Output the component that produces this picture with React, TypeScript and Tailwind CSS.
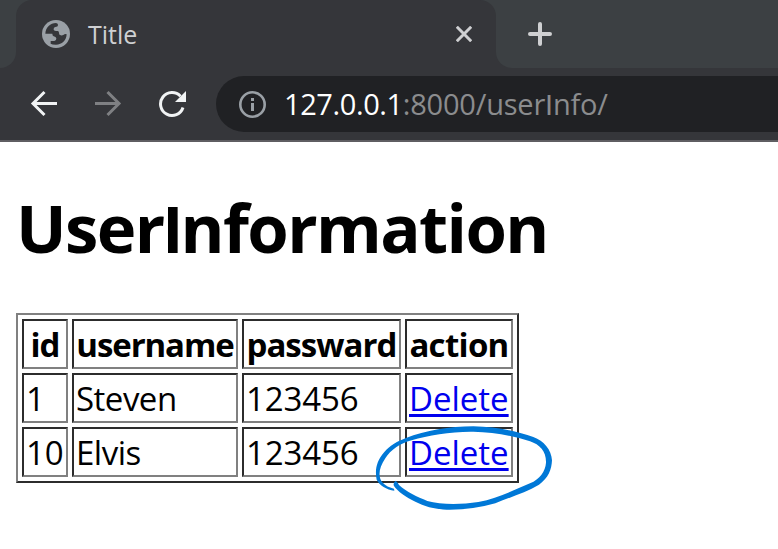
const cell =
  "h-[50px] border-2 border-t-[#2c2c2c] border-l-[#2c2c2c] border-r-[#808080] border-b-[#808080] p-0 px-[2px] pt-[2px] align-middle whitespace-nowrap";

const users = [
  { id: "1", username: "Steven", password: "123456" },
  { id: "10", username: "Elvis", password: "123456" },
];

function GlobeIcon() {
  return (
    <svg className="size-7 shrink-0" viewBox="0 0 84 84">
      <circle cx="42" cy="42" r="42" fill="#9aa0a6" />
      <path
        d="M10 41C11 22 25 9 42 9Q49 10 48 16Q48 21 40 21Q34 22 35 29Q36 33 47 33Q51 33 51 38Q50 44 56 46Q60 47 64 45Q69 41 74 43C73 61 60 74 42 74Q30 74 26 71V63H37Q44 62 43 55Q42 50 35 49Q31 47 31 41Z"
        fill="#35363a"
      />
    </svg>
  );
}

export default function App() {
  return (
    <div className="relative h-[549px] w-[778px] overflow-hidden bg-white font-['Open_Sans',sans-serif]">
      <header className="h-[142px] border-b-2 border-[#5f5e62] bg-[#35363a]">
        <div className="flex h-[68px]">
          <div className="w-4 rounded-br-[16px] bg-[#3c4043]" />
          <div className="flex w-[480px] bg-[#3c4043]">
            <div className="flex h-[68px] w-full items-center rounded-t-[16px] bg-[#35363a] pr-6 pl-[26px]">
              <GlobeIcon />
              <span className="ml-[18px] flex-1 text-[25px] leading-[34px] text-[#cfd0d2]">Title</span>
              <svg className="size-4" viewBox="0 0 16 16" fill="none" stroke="#cfd0d2" strokeWidth="3">
                <path d="M.8.8l14.4 14.4M15.2.8.8 15.2" />
              </svg>
            </div>
          </div>
          <div className="flex flex-1 items-center rounded-bl-[16px] bg-[#3c4043] pl-8">
            <svg className="size-6" viewBox="0 0 24 24" fill="none" stroke="#cfd0d2" strokeWidth="4" strokeLinecap="round">
              <path d="M12 2v20M2 12h20" />
            </svg>
          </div>
        </div>
        <div className="flex h-[72px] items-center pl-[30px]">
          <svg className="size-7" viewBox="0 0 28 28" fill="none" stroke="#f1f3f4" strokeWidth="3">
            <path d="M27 13.5H3M14.5 2 3 13.5 14.5 25" />
          </svg>
          <svg className="ml-9 size-7" viewBox="0 0 28 28" fill="none" stroke="#7f8083" strokeWidth="3">
            <path d="M1 13.5h24M13.5 2 25 13.5 13.5 25" />
          </svg>
          <svg className="ml-9 size-7" viewBox="0 0 28 28" fill="none">
            <path d="M22.5 6.2A11.5 11.5 0 1 0 25 17.5" stroke="#f1f3f4" strokeWidth="3" />
            <path d="M28 1v11H17z" fill="#f1f3f4" />
          </svg>
          <div className="ml-[30px] flex h-14 flex-1 items-center rounded-l-full bg-[#202124] pl-[22px]">
            <svg className="size-7" viewBox="0 0 28 28">
              <circle cx="14.5" cy="14.5" r="12.2" fill="none" stroke="#9aa0a6" strokeWidth="2.6" />
              <path d="M13 8h3v3h-3zM13 13h3v8h-3z" fill="#9aa0a6" />
            </svg>
            <span className="ml-[18px] text-[29px] leading-10 tracking-[-0.2px] whitespace-nowrap text-[#8b8c8e]">
              <span className="tracking-[-0.4px] text-white">127.0.0.1</span>:8000/user
              <span className="font-['Liberation_Sans',sans-serif]">I</span>nfo/
            </span>
          </div>
        </div>
      </header>
      <main className="px-4 pt-[41px] text-[33px] leading-[44px] text-black">
        <h1 className="h-[88px] text-[67px] leading-[88px] font-bold tracking-[-1.6px] whitespace-nowrap">
          User<span className="font-['Liberation_Sans',sans-serif]">I</span>nformation
        </h1>
        <table className="mt-[42px] w-[503px] table-fixed border-separate border-spacing-[4px] border-2 border-t-[#808080] border-r-[#2c2c2c] border-b-[#2c2c2c] border-l-[#808080]">
          <colgroup>
            <col className="w-[46px]" />
            <col className="w-[166px]" />
            <col className="w-[159px]" />
            <col className="w-[108px]" />
          </colgroup>
          <thead>
            <tr className="text-center font-bold tracking-[-1.1px]">
              <th className={cell}>id</th>
              <th className={cell}>username</th>
              <th className={`${cell} tracking-[-0.95px]`}>passward</th>
              <th className={`${cell} tracking-[-0.7px]`}>action</th>
            </tr>
          </thead>
          <tbody>
            {users.map((user) => (
              <tr key={user.id}>
                <td className={cell}>{user.id}</td>
                <td className={`${cell} tracking-[-0.5px]`}>{user.username}</td>
                <td className={`${cell} tracking-[-0.1px]`}>{user.password}</td>
                <td className={cell}>
                  <a className="text-[#0000ee] underline decoration-[3px] underline-offset-[3px]">Delete</a>
                </td>
              </tr>
            ))}
          </tbody>
        </table>
      </main>
      <svg className="pointer-events-none absolute top-[410px] left-[360px] h-[110px] w-[210px]" viewBox="0 0 630 330">
        <path
          d="M103 242C80 239 58 226 50 209C44 180 50 151 73 126C89 107 110 95 138 84C196 62 270 49 340 49C410 50 470 64 520 81C552 93 574 119 576 151C575 178 565 205 537 224C497 247 450 262 406 280C360 293 310 300 260 299C220 297 192 288 166 275C139 262 112 244 102 228Q98 219 107 212Q115 219 117 225C139 246 172 260 202 273C242 284 302 284 355 276C412 266 458 242 510 220C540 207 556 184 558 158C559 125 540 104 510 94C455 76 400 66 340 65C275 64 206 75 155 91C120 100 92 120 76 145C60 168 55 190 61 207C68 223 84 232 102 236Z"
          fill="#0078d7"
        />
      </svg>
    </div>
  );
}
